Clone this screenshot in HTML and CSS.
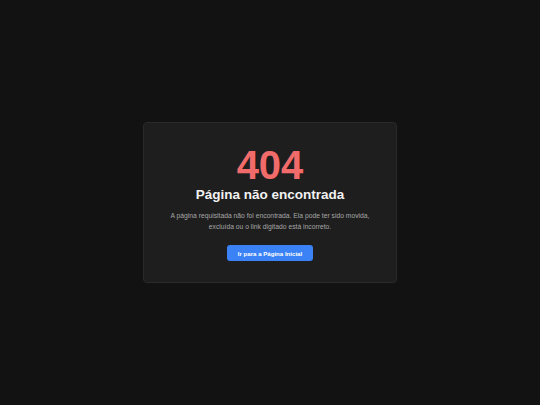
FILE: index.html
```html
<!DOCTYPE html>
<html lang="pt-BR">
<head>
<meta charset="utf-8">
<title>Página não encontrada</title>
<link rel="stylesheet" href="styles.css">
</head>
<body>
<main class="page">
  <section class="card">
    <h1 class="code">404</h1>
    <h2 class="title">Página não encontrada</h2>
    <p class="message">A página requisitada não foi encontrada. Ela pode ter sido movida, excluída ou o link digitado está incorreto.</p>
    <div class="actions">
      <a class="btn" href="#">Ir para a Página Inicial</a>
    </div>
  </section>
</main>
</body>
</html>
```

FILE: styles.css
```css
html, body {
  margin: 0;
  padding: 0;
  background: #121212;
}
body {
  font-family: "Liberation Sans", Arial, sans-serif;
}
.page {
  min-height: 405px;
  display: flex;
  align-items: center;
  justify-content: center;
}
.card {
  box-sizing: border-box;
  width: 254px;
  background: #1e1e1e;
  border: 1px solid #2a2a2a;
  border-radius: 4px;
  padding: 22px 24px 21px;
  text-align: center;
}
.code {
  margin: 0;
  font-size: 40px;
  line-height: 40px;
  font-weight: 700;
  color: #f26b6b;
}
.title {
  margin: 2.5px 0 0;
  font-size: 13.5px;
  line-height: 16px;
  font-weight: 700;
  color: #f2f2f2;
}
.message {
  margin: 7.5px 0 0;
  font-size: 6.75px;
  line-height: 10.8px;
  color: #a6a6a6;
}
.actions {
  margin-top: 12.5px;
  display: flex;
  justify-content: center;
}
.btn {
  display: block;
  padding: 4.5px 10.5px;
  font-size: 6.1px;
  line-height: 7px;
  font-weight: 700;
  color: #ffffff;
  background: #3b82f6;
  border-radius: 3px;
  text-decoration: none;
}
```
